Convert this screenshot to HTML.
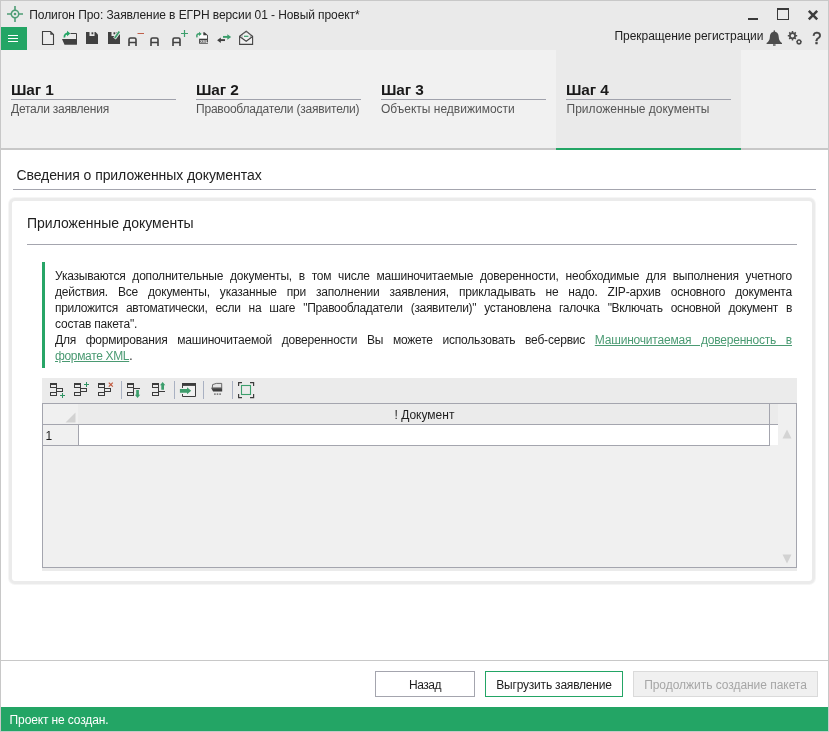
<!DOCTYPE html>
<html lang="ru">
<head>
<meta charset="utf-8">
<title>Полигон Про</title>
<style>
html,body{margin:0;padding:0;}
body{width:829px;height:732px;overflow:hidden;background:#fff;font-family:"Liberation Sans",sans-serif;color:#1e1e1e;}
#win{position:absolute;left:0;top:0;width:827px;height:730px;border:1px solid #c8c8c8;background:#fff;overflow:hidden;}
#layer{position:absolute;left:0;top:0;width:827px;height:730px;will-change:transform;}
.abs{position:absolute;}
.t{position:absolute;white-space:nowrap;line-height:1;}
#titlebar{left:0;top:0;width:827px;height:49px;background:#eaeaea;}
#menu{left:0;top:26px;width:26px;height:23px;background:#23a565;}
#menu i{position:absolute;left:7px;width:10px;height:1px;background:#fff;}
#steps{left:0;top:49px;width:827px;height:98px;background:#f1f1f1;}
#steps .right{position:absolute;left:740px;top:0;width:87px;height:98px;background:#f1f1f1;}
#steps .active{position:absolute;left:555px;top:0;width:185px;height:98px;background:#eaeaea;}
#stepline{left:0;top:147px;width:827px;height:2px;background:#c8c8c8;}
#activeline{left:555px;top:147px;width:185px;height:2px;background:#23a565;}
.stitle{font-weight:bold;font-size:15.400px;color:#1a1a1a;letter-spacing:-0.1px;}
.sline{position:absolute;height:1px;background:#a0a2ac;width:165px;top:98px;}
.ssub{font-size:12px;color:#555;}
.hline{position:absolute;height:1px;background:#a4a5ae;}
#card{left:8px;top:197px;width:800px;height:380px;background:#fff;border:3px solid #ebebeb;border-radius:6px;box-shadow:0 0 0 1px #f5f5f5;}
#para{left:54px;top:266.500px;width:737px;font-size:12px;line-height:16px;color:#1e1e1e;letter-spacing:-0.2px;}
#para div{text-align:justify;text-align-last:justify;white-space:nowrap;height:16px;}
#para div.l{text-align-last:left;}
#para a{color:#4a9a72;text-decoration:underline;}
#gbar{left:41px;top:261px;width:3px;height:106px;background:#27a567;}
#tbar{left:41px;top:377px;width:755px;height:193px;background:#ebebeb;}
.sep{position:absolute;width:1px;background:#a9b1c2;top:380px;height:18px;}
#grid{left:41px;top:402px;width:753px;height:163px;border:1px solid #a4a5ae;background:#f0f0f0;}
.btn{position:absolute;top:670px;height:24px;border:1px solid #a4a5ae;background:#fff;font-size:12px;text-align:center;line-height:26px;}
#status{left:0;top:706px;width:827px;height:24px;background:#23a565;}
</style>
</head>
<body>
<div id="win">
<div id="layer">
  <div id="titlebar" class="abs"></div>
  <!-- logo -->
  <svg class="abs" style="left:5px;top:4px" width="18" height="18" viewBox="0 0 18 18">
    <g stroke="#4f9d76" fill="none">
      <circle cx="9" cy="9" r="3.7" stroke-width="1.5"/>
      <path d="M9 1v4.5M9 12.5V17M1 9h4.5M12.500 9H17" stroke-width="1.6"/>
    </g>
    <circle cx="9" cy="9" r="1.3" fill="#4f9d76"/>
  </svg>
  <div class="t" id="title" style="left:28.300px;top:8px;font-size:12px;color:#222;letter-spacing:-0.08px;">Полигон Про: Заявление в ЕГРН версии 01 - Новый проект*</div>
  <!-- window controls -->
  <div class="abs" style="left:747px;top:17px;width:10px;height:2px;background:#3a3a3a"></div>
  <div class="abs" style="left:776px;top:7px;width:10px;height:9px;border:1px solid #3a3a3a;border-top-width:2px"></div>
  <svg class="abs" style="left:806px;top:9px" width="12" height="11" viewBox="0 0 12 11"><path d="M1.800 0.900L10.200 9.300M10.200 0.900L1.800 9.300" stroke="#3e3e3e" stroke-width="2.500" fill="none"/></svg>

  <div id="menu" class="abs"><i style="top:8px"></i><i style="top:11px"></i><i style="top:14px"></i></div>

  <!-- toolbar icons -->
  <svg class="abs" style="left:35px;top:25px" width="224" height="24" viewBox="36 26 224 24">
    <!-- new -->
    <path d="M42.500 31.500H50.500L53.500 34.500V44.500H42.500Z" fill="#ececec" stroke="#404040" stroke-width="1.100" stroke-linejoin="miter"/>
    <path d="M50.300 31.700V34.700H53.300Z" fill="#404040"/>
    <!-- open -->
    <path d="M70.500 33.500H76.500V44" fill="none" stroke="#404040" stroke-width="1"/>
    <path d="M62 39H76L77 44.700H64.500Z" fill="#404040"/>
    <path d="M64.500 37.500C64 34.500 66 33.500 68.500 33.500" fill="none" stroke="#23a565" stroke-width="1.800"/>
    <path d="M67 30.800L70.300 33.600L67 36.300Z" fill="#23a565"/>
    <!-- save -->
    <path d="M86 32H95.500L98 34.500V44H86Z" fill="#404040"/>
    <rect x="89.500" y="32" width="5" height="4" fill="#eaeaea"/>
    <rect x="91.500" y="32.300" width="1.800" height="2" fill="#404040"/>
    <!-- save as -->
    <path d="M108 32H117.500L120 34.500V44H108Z" fill="#404040"/>
    <rect x="111.500" y="32" width="5" height="4" fill="#eaeaea"/>
    <rect x="113.500" y="32.300" width="1.800" height="2" fill="#404040"/>
    <path d="M119.600 31.500L114.500 38.500" stroke="#ebebeb" stroke-width="3.200"/>
    <path d="M119.300 31.500L114.800 38" stroke="#3c9e6c" stroke-width="1.800"/>
    <!-- A- -->
    <g fill="none" stroke="#404040" stroke-width="1.600">
      <path d="M129 46V39.500Q129 38 130.500 38H134.500Q136 38 136 39.500V46M129 42.500H136"/>
      <path d="M151 46V39.500Q151 38 152.500 38H156.500Q158 38 158 39.500V46M151 42.500H158"/>
      <path d="M173 46V39.500Q173 38 174.500 38H178.500Q180 38 180 39.500V46M173 42.500H180"/>
    </g>
    <rect x="137.500" y="33" width="6.500" height="1" fill="#c0604a"/>
    <path d="M181 33.500H188M184.500 30V37" stroke="#3c9e6c" stroke-width="1.200" fill="none"/>
    <!-- xml doc -->
    <path d="M199.600 39V34H203.500V32.500L207.400 35V39Z" fill="#fff"/>
    <path d="M203.300 32.300H204.500L207.900 35.200V39H207V35.300H203.300Z" fill="#404040"/>
    <rect x="199.100" y="38.700" width="8.800" height="5" fill="#404040"/>
    <path d="M197 37.400C196.300 34.800 197.500 33.700 199.500 33.800" fill="none" stroke="#3c9e6c" stroke-width="1.500"/>
    <path d="M199 31.800L201.700 34L199 36Z" fill="#3c9e6c"/>
    <text x="200" y="42.700" font-size="3.800" font-weight="bold" fill="#fff" font-family="Liberation Sans, sans-serif">XML</text>
    <!-- arrows -->
    <path d="M223 36.900H228" stroke="#3c9e6c" stroke-width="1.900"/>
    <path d="M227.300 34.200L231.200 37L227.300 39.800Z" fill="#3c9e6c"/>
    <path d="M220 40.100H225" stroke="#404040" stroke-width="1.900"/>
    <path d="M220.800 37.500L217.100 40.200L220.800 42.900Z" fill="#404040"/>
    <!-- envelope -->
    <path d="M239.600 36.300L246.200 31.300L252.600 36.300V44.400H239.600Z" fill="#f0f0f0" stroke="#454545" stroke-width="1.100"/>
    <path d="M239.600 36.500L246.200 41.200L252.600 36.500" fill="none" stroke="#454545" stroke-width="1.100"/>
    <path d="M242 38V34.500L246.200 31.500L250.400 34.500V38" fill="none" stroke="#777" stroke-width="0.600"/>
    <rect x="244" y="35.700" width="4.400" height="1.200" fill="#3c9e6c"/>
  </svg>

  <div class="t" id="regtxt" style="left:613.500px;top:29px;font-size:12px;color:#1e1e1e;letter-spacing:-0.04px;">Прекращение регистрации</div>
  <!-- bell gear help -->
  <svg class="abs" style="left:763px;top:27px" width="60" height="20" viewBox="764 28 60 20">
    <path d="M774.300 31.800C777.300 31.800 778.600 34 778.700 36.800C778.800 40 780 41.800 782 43V44H766.600V43C768.600 41.800 769.800 40 769.900 36.800C770 34 771.300 31.800 774.300 31.800Z" fill="#4c4c4c"/>
    <rect x="773.600" y="30.300" width="1.400" height="1.800" rx="0.600" fill="#4c4c4c"/>
    <rect x="773" y="44.300" width="2.600" height="1.400" fill="#4c4c4c"/>
    <g fill="#4c4c4c">
      <circle cx="792.500" cy="35.700" r="3.500"/>
      <circle cx="799" cy="41.900" r="2.300"/>
    </g>
    <g stroke="#4c4c4c" stroke-width="1.500" fill="none">
      <path d="M792.500 31V40.400M787.800 35.700H797.200M789.200 32.400L795.800 39M795.800 32.400L789.200 39"/>
    </g>
    <g stroke="#4c4c4c" stroke-width="1.100" fill="none">
      <path d="M799 38.900V44.900M796 41.900H802M796.900 39.800L801.100 44M801.100 39.800L796.900 44"/>
    </g>
    <circle cx="792.500" cy="35.700" r="1.700" fill="#eaeaea"/>
    <circle cx="799" cy="41.900" r="1.100" fill="#eaeaea"/>
    <text x="812.200" y="44" font-size="16.300" fill="#404040" stroke="#404040" stroke-width="0.500" font-family="Liberation Sans, sans-serif">?</text>
  </svg>

  <!-- steps -->
  <div id="steps" class="abs"><div class="right"></div><div class="active"></div>
    <div class="t stitle" style="left:10px;top:32px">Шаг 1</div>
    <div class="sline" style="left:10px;top:49px"></div>
    <div class="t ssub" style="left:10px;top:52.600px;letter-spacing:-0.24px">Детали заявления</div>
    <div class="t stitle" style="left:195px;top:32px">Шаг 2</div>
    <div class="sline" style="left:195px;top:49px"></div>
    <div class="t ssub" style="left:195px;top:52.600px;letter-spacing:-0.2px">Правообладатели (заявители)</div>
    <div class="t stitle" style="left:380px;top:32px">Шаг 3</div>
    <div class="sline" style="left:380px;top:49px"></div>
    <div class="t ssub" style="left:380px;top:52.600px;">Объекты недвижимости</div>
    <div class="t stitle" style="left:565px;top:32px">Шаг 4</div>
    <div class="sline" style="left:565px;top:49px"></div>
    <div class="t ssub" style="left:565.500px;top:52.600px;">Приложенные документы</div>
  </div>
  <div id="stepline" class="abs"></div>
  <div id="activeline" class="abs"></div>

  <!-- section heading -->
  <div class="t" id="h1" style="left:15.400px;top:167px;font-size:14px;color:#1e1e1e;letter-spacing:-0.07px;">Сведения о приложенных документах</div>
  <div class="hline" style="left:12px;top:188px;width:803px"></div>

  <div id="card" class="abs"></div>
  <div class="t" id="h2" style="left:26px;top:215px;font-size:14px;color:#1e1e1e;">Приложенные документы</div>
  <div class="hline" style="left:26px;top:243px;width:770px"></div>

  <div id="gbar" class="abs"></div>
  <div id="para" class="abs">
    <div>Указываются дополнительные документы, в том числе машиночитаемые доверенности, необходимые для выполнения учетного</div>
    <div>действия. Все документы, указанные при заполнении заявления, прикладывать не надо. ZIP-архив основного документа</div>
    <div style="letter-spacing:-0.32px">приложится автоматически, если на шаге "Правообладатели (заявители)" установлена галочка "Включать основной документ в</div>
    <div class="l" style="letter-spacing:-0.19px">состав пакета".</div>
    <div>Для формирования машиночитаемой доверенности Вы можете использовать веб-сервис <a>Машиночитаемая доверенность в</a></div>
    <div class="l" style="letter-spacing:-0.34px"><a>формате XML</a>.</div>
  </div>

  <div id="tbar" class="abs"></div>
  <svg class="abs" style="left:41px;top:377px" width="755" height="25" viewBox="42 378 755 25">
    <defs>
      <linearGradient id="fg" x1="0" y1="0" x2="0" y2="1"><stop offset="0" stop-color="#6a6a6a"/><stop offset="0.400" stop-color="#424242"/><stop offset="1" stop-color="#3c3c3c"/></linearGradient>
    </defs>
    <g transform="translate(50 383)" fill="none" stroke="#3c3c3c" stroke-width="1"><rect x="0.500" y="0.500" width="6" height="4"/><rect x="0" y="0" width="7" height="2" fill="#3c3c3c" stroke="none"/><rect x="6.500" y="5.500" width="6" height="3"/><rect x="0.500" y="9.500" width="6" height="3"/></g>
    <path d="M60 395.500H65M62.500 393V398" stroke="#2f9463" stroke-width="1" fill="none"/>
    <g transform="translate(74 383)" fill="none" stroke="#3c3c3c" stroke-width="1"><rect x="0.500" y="0.500" width="6" height="4"/><rect x="0" y="0" width="7" height="2" fill="#3c3c3c" stroke="none"/><rect x="6.500" y="5.500" width="6" height="3"/><rect x="0.500" y="9.500" width="6" height="3"/></g>
    <path d="M84 384.500H89M86.500 382V387" stroke="#2f9463" stroke-width="1" fill="none"/>
    <g transform="translate(98 383)" fill="none" stroke="#3c3c3c" stroke-width="1"><rect x="0.500" y="0.500" width="6" height="4"/><rect x="0" y="0" width="7" height="2" fill="#3c3c3c" stroke="none"/><rect x="6.500" y="5.500" width="6" height="3"/><rect x="0.500" y="9.500" width="6" height="3"/></g>
    <path d="M108.800 382.700L112.800 386.700M112.800 382.700L108.800 386.700" stroke="#c0583c" stroke-width="1.200" fill="none"/>
    <!-- move down -->
    <g transform="translate(127 383)" fill="none" stroke="#3c3c3c" stroke-width="1"><rect x="0.500" y="0.500" width="6" height="4"/><rect x="0" y="0" width="7" height="2" fill="#3c3c3c" stroke="none"/><rect x="0.500" y="9.500" width="6" height="3"/></g>
    <path d="M133.500 387V393M133 388.500H140" stroke="#3c3c3c" stroke-width="1" fill="none"/>
    <path d="M136.200 390H138.900V394.800H140.200L137.550 398L134.900 394.800H136.200Z" fill="#3c9e6c"/>
    <!-- move up -->
    <g transform="translate(152 383)" fill="none" stroke="#3c3c3c" stroke-width="1"><rect x="0.500" y="0.500" width="6" height="4"/><rect x="0" y="0" width="7" height="2" fill="#3c3c3c" stroke="none"/><rect x="0.500" y="9.500" width="6" height="3"/></g>
    <path d="M158.500 387V393M158 391.500H165" stroke="#3c3c3c" stroke-width="1" fill="none"/>
    <path d="M161.300 389.700H164V385.200H165.300L162.650 382.100L160 385.200H161.300Z" fill="#3c9e6c"/>
    <!-- import -->
    <rect x="183" y="385" width="12" height="11" fill="#f1f1f1"/>
    <rect x="182" y="383" width="14" height="2.900" fill="#3c3c3c"/>
    <path d="M182.500 385V388M182.500 394V396.500H195.500V385" fill="none" stroke="#3c3c3c" stroke-width="1"/>
    <path d="M179.900 389H187V387.300L191.200 390.800L187 394.200V392.700H179.900Z" fill="#3f9d6c"/>
    <!-- folder -->
    <path d="M212.300 388L212.600 384.600L216.300 383.400H221.700V388Z" fill="#e4e4e4" stroke="#5a5a5a" stroke-width="0.900"/>
    <path d="M211 387.700H222.200V391.500H213.100Z" fill="url(#fg)"/>
    <rect x="214.100" y="393.500" width="1.600" height="1.200" fill="#555"/>
    <rect x="216.700" y="393.500" width="1.600" height="1.200" fill="#555"/>
    <rect x="219.300" y="393.500" width="1.600" height="1.200" fill="#555"/>
    <!-- fullscreen -->
    <path d="M238.600 386V382.600H242M250 382.600H253.600V386M253.600 394V397.600H250M242 397.600H238.600V394" fill="none" stroke="#3c3c3c" stroke-width="1.200"/>
    <rect x="241.500" y="385.500" width="9" height="9" fill="none" stroke="#3c9e6c" stroke-width="1.100"/>
  </svg>
  <div class="sep" style="left:120px"></div>
  <div class="sep" style="left:173px"></div>
  <div class="sep" style="left:202px"></div>
  <div class="sep" style="left:231px"></div>

  <div id="grid" class="abs">
    <div class="abs" style="left:0;top:0;width:735px;height:20px;background:#ebebeb;border-bottom:1px solid #a4a5ae"></div>
    <div class="abs" style="left:0;top:0;width:35px;height:20px;background:#f0f0f0"></div>
    <div class="abs" style="left:0;top:21px;width:35px;height:20px;background:#f0f0f0"></div>
    <div class="abs" style="left:36px;top:21px;width:699px;height:20px;background:#fff"></div>
    <div class="abs" style="left:0;top:41px;width:727px;height:1px;background:#a4a5ae"></div>
    <div class="abs" style="left:35px;top:21px;width:1px;height:20px;background:#a4a5ae"></div>
    <div class="abs" style="left:726px;top:0;width:1px;height:42px;background:#a4a5ae"></div>
    <div class="abs" style="left:735px;top:0;width:18px;height:163px;background:#f0f0f0"></div>
    <svg class="abs" style="left:22.300px;top:8px" width="11" height="11" viewBox="0 0 11 11"><path d="M10.500 0.500V10.500H0.500Z" fill="#d2d2d2"/></svg>
    <svg class="abs" style="left:739.400px;top:25px" width="10" height="10" viewBox="0 0 10 10"><path d="M5 0.500L9.500 9.500H0.500Z" fill="#d4d4d4"/></svg>
    <svg class="abs" style="left:739.300px;top:149.500px" width="10" height="10" viewBox="0 0 10 10"><path d="M0.500 0.500H9.500L5 9.500Z" fill="#d2d2d2"/></svg>
    <div class="t" style="left:2.500px;top:26px;font-size:12px;color:#1e1e1e">1</div>
    <div class="t" id="colh" style="left:351.500px;top:5px;font-size:12px;color:#1e1e1e">! Документ</div>
  </div>

  <div class="hline" style="left:0;top:659px;width:827px;background:#c8c8c8"></div>
  <div class="btn" style="left:374px;width:98px;letter-spacing:-0.5px">Назад</div>
  <div class="btn" style="left:484px;width:136px;border-color:#23a565;letter-spacing:-0.2px">Выгрузить заявление</div>
  <div class="btn" style="left:632px;width:183px;background:#f0f0f0;border-color:#dadada;color:#a6a6a6;letter-spacing:-0.04px">Продолжить создание пакета</div>

  <div id="status" class="abs"></div>
  <div class="t" id="sttxt" style="left:8.600px;top:713px;font-size:12px;color:#fff;letter-spacing:-0.13px;">Проект не создан.</div>
</div>
</div>
</body>
</html>
